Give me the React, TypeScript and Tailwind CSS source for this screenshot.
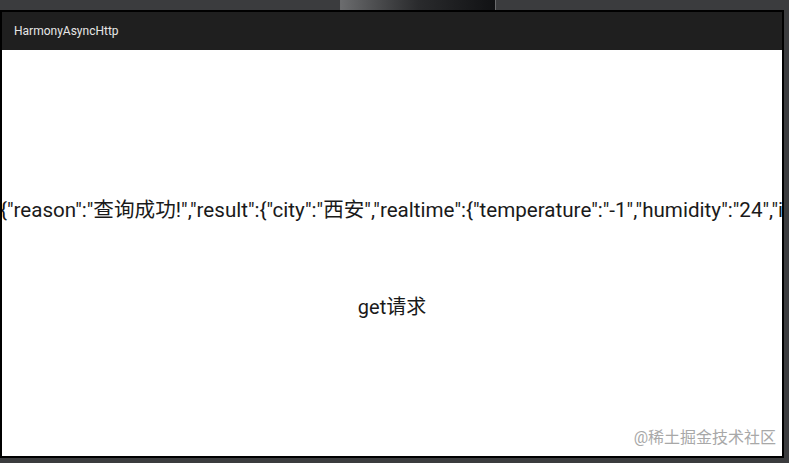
export default function App() {
  const json =
    '{"reason":"查询成功!","result":{"city":"西安","realtime":{"temperature":"-1","humidity":"24","info":"晴","wid":"00","direct":"西北风","power":"2级","aqi":"81"}}}';

  return (
    <div className="relative flex h-[463px] w-[789px] flex-col overflow-hidden bg-[#3b3c3e] font-['Roboto','Noto_Sans_CJK_SC',sans-serif]">
      {/* top strip with tab */}
      <div className="relative h-[10px] shrink-0">
        <div className="absolute left-[340px] top-0 h-[10px] w-[156px] border-x border-[#6a6b6d] bg-gradient-to-r from-[#6b6c6e] via-[#2a2b2d] to-[#111214]" />
      </div>

      {/* device frame */}
      <div className="flex h-[448px] w-[784px] flex-col border-2 border-black bg-white">
        <div className="flex h-[38px] shrink-0 items-center bg-[#1f1f1f] pl-3">
          <span className="text-[12px] text-[#e6e6e6]">HarmonyAsyncHttp</span>
        </div>

        <div className="relative flex flex-1 flex-col overflow-hidden bg-white">
          <div className="ml-[-2px] mt-[147px] whitespace-nowrap text-[20.6px] leading-[26px] text-[#1a1a1a]">
            {json}
          </div>
          <div className="mt-[71px] text-center text-[20px] leading-[26px] text-[#1a1a1a]">get请求</div>

          <div className="absolute bottom-[8px] right-[6px] text-[16px] leading-[20px] text-[#a8a8a8]">
            @稀土掘金技术社区
          </div>
        </div>
      </div>
    </div>
  );
}
